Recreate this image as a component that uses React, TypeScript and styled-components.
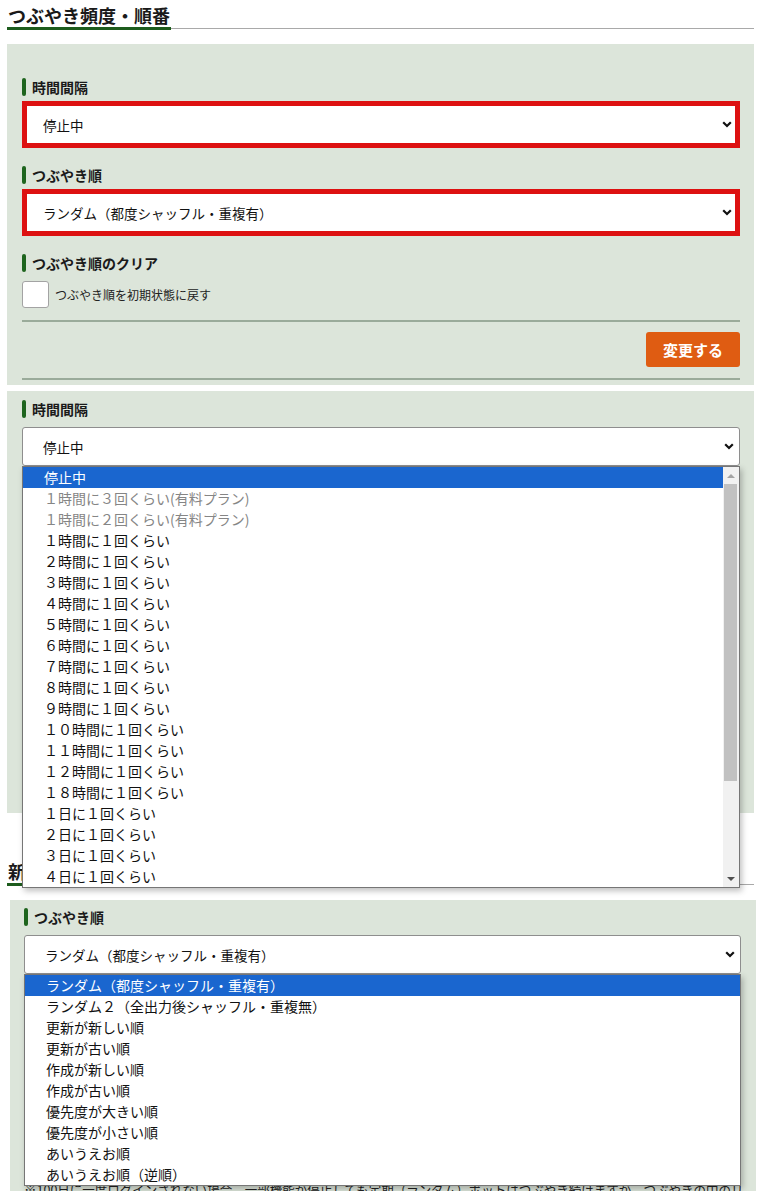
import React from 'react'
import styled, { createGlobalStyle, css } from 'styled-components'

const GlobalStyle = createGlobalStyle`
  body {
    margin: 0;
    background: #fff;
    color: #1a1a1a;
    font-family: "Noto Sans CJK JP", "Noto Sans", sans-serif;
  }
`

const Page = styled.div`
  padding: 0 7px;
`

const Section = styled.section<{ $gap?: number }>`
  margin-top: ${(p) => p.$gap ?? 0}px;
`

const SectionHeading = styled.h2`
  display: flex;
  margin: 0;
  padding-top: 3px;
  border-bottom: 1px solid #a9a9a9;
  font-size: 18px;
  font-weight: 700;
  line-height: 24px;
  color: #1a1a1a;
`

const HeadingText = styled.span`
  padding: 0 1px;
  margin-bottom: -2px;
  border-bottom: 3px solid #1d5c1d;
  white-space: nowrap;
`

const Panel = styled.div<{ $gap: number; $padTop: number; $height?: number; $offset?: boolean }>`
  box-sizing: border-box;
  margin-top: ${(p) => p.$gap}px;
  padding: ${(p) => p.$padTop}px 14px 5px 15px;
  background: #dce5da;
  ${(p) => p.$height && css`height: ${p.$height}px;`}
  ${(p) =>
    p.$offset &&
    css`
      margin-left: 3px;
      margin-right: -2px;
      padding-left: 14px;
      padding-right: 15px;
    `}
`

const FieldGroup = styled.div`
  & + & {
    margin-top: 22px;
  }
`

const FieldLabel = styled.div`
  display: flex;
  align-items: center;
  gap: 6px;
  margin-bottom: 9px;
  font-size: 14px;
  font-weight: 700;
  line-height: 18px;
  color: #1a1a1a;

  &::before {
    content: '';
    width: 4px;
    height: 18px;
    border-radius: 2px;
    background: #1e651e;
  }
`

const SelectWrap = styled.div`
  position: relative;
`

const SelectBox = styled.div<{ $alert?: boolean }>`
  box-sizing: border-box;
  display: flex;
  align-items: center;
  justify-content: space-between;
  height: 39px;
  padding: 0 5px 0 20px;
  background: #fff;
  border: 1px solid #8e8e8e;
  border-radius: 3px;
  font-size: 13.5px;
  color: #111;
  white-space: nowrap;

  ${(p) =>
    p.$alert &&
    css`
      margin: 0 4px;
      padding-left: 16px;
      padding-right: 3px;
      border-color: #dd1111;
      border-radius: 0;
      outline: 4px solid #dd1111;
    `}
`

const Chevron = () => (
  <svg width="10" height="7" viewBox="0 0 10 7">
    <polyline points="1.2,1.2 5,5 8.8,1.2" fill="none" stroke="#111" strokeWidth="2.2" />
  </svg>
)

const CheckRow = styled.label`
  display: flex;
  align-items: center;
  gap: 6px;
  font-size: 12px;
  color: #222;
`

const CheckBox = styled.span`
  box-sizing: border-box;
  width: 27px;
  height: 27px;
  background: #fff;
  border: 1px solid #a3a3a3;
  border-radius: 3px;
`

const Divider = styled.hr<{ $gap: number }>`
  height: 2px;
  margin: ${(p) => p.$gap}px 0 0;
  border: none;
  background: #9aab9a;
`

const ButtonRow = styled.div`
  display: flex;
  justify-content: flex-end;
  margin-top: 10px;
`

const SubmitButton = styled.button`
  width: 94px;
  height: 35px;
  padding: 0;
  border: none;
  border-radius: 3px;
  background: #df5c12;
  color: #fff;
  font-family: "Noto Sans CJK JP", sans-serif;
  font-size: 15px;
  font-weight: 700;
`

const DropList = styled.div`
  position: absolute;
  top: 100%;
  left: 0;
  right: 0;
  z-index: 5;
  display: flex;
  background: #fff;
  border: 1px solid #767676;
  box-shadow: 2px 3px 6px rgba(0, 0, 0, 0.25);
`

const Options = styled.ul`
  flex: 1;
  margin: 0;
  padding: 0;
  list-style: none;
`

const Option = styled.li<{ $selected?: boolean; $disabled?: boolean }>`
  height: 21px;
  padding-left: 21px;
  font-size: 14px;
  line-height: 21px;
  white-space: nowrap;
  color: ${(p) => (p.$selected ? '#fff' : p.$disabled ? '#858585' : '#111')};
  background: ${(p) => (p.$selected ? '#1a66cf' : 'transparent')};
`

const ScrollTrack = styled.div`
  display: flex;
  flex-direction: column;
  width: 16px;
  background: #f1f1f1;
`

const ScrollArrow = styled.div<{ $dir: 'up' | 'down' }>`
  display: flex;
  align-items: center;
  justify-content: center;
  height: 17px;

  &::after {
    content: '';
    border-left: 4px solid transparent;
    border-right: 4px solid transparent;
    ${(p) =>
      p.$dir === 'up'
        ? css`border-bottom: 4px solid #a3a3a3;`
        : css`border-top: 4px solid #505050;`}
  }
`

const ScrollThumb = styled.div<{ $size: number }>`
  height: ${(p) => p.$size}px;
  margin: 0 2px 0 1px;
  background: #c1c1c1;
`

const ScrollRest = styled.div`
  flex: 1;
`

const Note = styled.p`
  margin: 207px 0 0;
  font-size: 12.5px;
  line-height: 18px;
  color: #222;
  white-space: nowrap;
  overflow: hidden;
`

type Opt = { label: string; disabled?: boolean }

const intervalOptions: Opt[] = [
  { label: '停止中' },
  { label: '１時間に３回くらい(有料プラン)', disabled: true },
  { label: '１時間に２回くらい(有料プラン)', disabled: true },
  { label: '１時間に１回くらい' },
  { label: '２時間に１回くらい' },
  { label: '３時間に１回くらい' },
  { label: '４時間に１回くらい' },
  { label: '５時間に１回くらい' },
  { label: '６時間に１回くらい' },
  { label: '７時間に１回くらい' },
  { label: '８時間に１回くらい' },
  { label: '９時間に１回くらい' },
  { label: '１０時間に１回くらい' },
  { label: '１１時間に１回くらい' },
  { label: '１２時間に１回くらい' },
  { label: '１８時間に１回くらい' },
  { label: '１日に１回くらい' },
  { label: '２日に１回くらい' },
  { label: '３日に１回くらい' },
  { label: '４日に１回くらい' },
]

const orderOptions: Opt[] = [
  { label: 'ランダム（都度シャッフル・重複有）' },
  { label: 'ランダム２（全出力後シャッフル・重複無）' },
  { label: '更新が新しい順' },
  { label: '更新が古い順' },
  { label: '作成が新しい順' },
  { label: '作成が古い順' },
  { label: '優先度が大きい順' },
  { label: '優先度が小さい順' },
  { label: 'あいうえお順' },
  { label: 'あいうえお順（逆順）' },
]

const Select = ({ value, alert }: { value: string; alert?: boolean }) => (
  <SelectBox $alert={alert}>
    <span>{value}</span>
    <Chevron />
  </SelectBox>
)

const OpenSelect = ({ options, scroll }: { options: Opt[]; scroll?: boolean }) => (
  <SelectWrap>
    <Select value={options[0].label} />
    <DropList>
      <Options>
        {options.map((o, i) => (
          <Option key={o.label} $selected={i === 0} $disabled={o.disabled}>
            {o.label}
          </Option>
        ))}
      </Options>
      {scroll && (
        <ScrollTrack>
          <ScrollArrow $dir="up" />
          <ScrollThumb $size={297} />
          <ScrollRest />
          <ScrollArrow $dir="down" />
        </ScrollTrack>
      )}
    </DropList>
  </SelectWrap>
)

export default function App() {
  return (
    <Page>
      <GlobalStyle />

      <Section>
        <SectionHeading>
          <HeadingText>つぶやき頻度・順番</HeadingText>
        </SectionHeading>
        <Panel $gap={15} $padTop={34}>
          <FieldGroup>
            <FieldLabel>時間間隔</FieldLabel>
            <Select value="停止中" alert />
          </FieldGroup>
          <FieldGroup>
            <FieldLabel>つぶやき順</FieldLabel>
            <Select value="ランダム（都度シャッフル・重複有）" alert />
          </FieldGroup>
          <FieldGroup>
            <FieldLabel>つぶやき順のクリア</FieldLabel>
            <CheckRow>
              <CheckBox />
              つぶやき順を初期状態に戻す
            </CheckRow>
          </FieldGroup>
          <Divider $gap={12} />
          <ButtonRow>
            <SubmitButton>変更する</SubmitButton>
          </ButtonRow>
          <Divider $gap={11} />
        </Panel>
      </Section>

      <Section>
        <Panel $gap={6} $padTop={9} $height={422}>
          <FieldLabel>時間間隔</FieldLabel>
          <OpenSelect options={intervalOptions} scroll />
        </Panel>
      </Section>

      <Section $gap={43}>
        <SectionHeading>
          <HeadingText>新着つぶやき設定</HeadingText>
        </SectionHeading>
        <Panel $gap={15} $padTop={8} $offset>
          <FieldLabel>つぶやき順</FieldLabel>
          <OpenSelect options={orderOptions} />
          <Note>
            ※100日に一度ログインされない場合、一部機能が停止しても定期（ランダム）ボットはつぶやき続けますが、つぶやきの中のリンクは
          </Note>
        </Panel>
      </Section>
    </Page>
  )
}
